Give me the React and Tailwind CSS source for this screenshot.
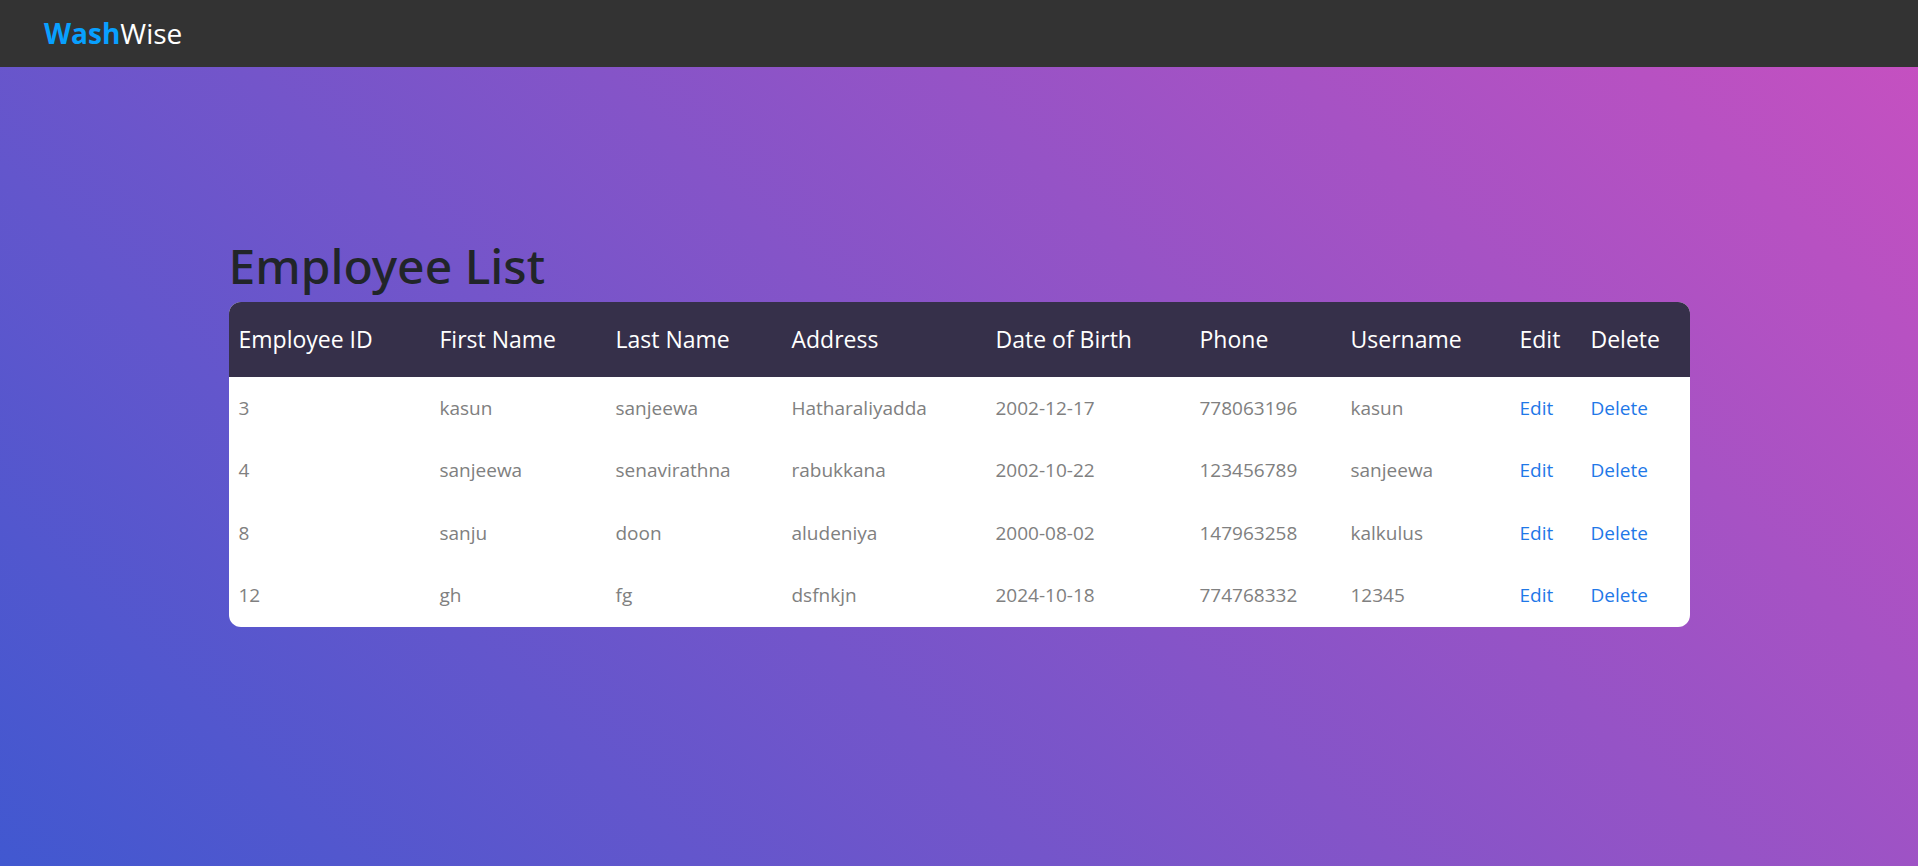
const columns = [
  { label: 'Employee ID', width: 'w-[201px]' },
  { label: 'First Name', width: 'w-[176px]' },
  { label: 'Last Name', width: 'w-[176px]' },
  { label: 'Address', width: 'w-[204px]' },
  { label: 'Date of Birth', width: 'w-[204px]' },
  { label: 'Phone', width: 'w-[151px]' },
  { label: 'Username', width: 'w-[169px]' },
  { label: 'Edit', width: 'w-[71px]' },
  { label: 'Delete', width: 'w-[109px]' },
];

const employees = [
  ['3', 'kasun', 'sanjeewa', 'Hatharaliyadda', '2002-12-17', '778063196', 'kasun'],
  ['4', 'sanjeewa', 'senavirathna', 'rabukkana', '2002-10-22', '123456789', 'sanjeewa'],
  ['8', 'sanju', 'doon', 'aludeniya', '2000-08-02', '147963258', 'kalkulus'],
  ['12', 'gh', 'fg', 'dsfnkjn', '2024-10-18', '774768332', '12345'],
];

function Header() {
  return (
    <header className="flex h-[67px] shrink-0 items-center bg-[#333333] px-11 pb-[2px]">
      <a href="#home" className="font-['Open_Sans','Noto_Sans',sans-serif] text-[28px] leading-9 text-white">
        <span className="font-bold text-[#08a0ff]">Wash</span>Wise
      </a>
    </header>
  );
}

function EmployeeTable() {
  return (
    <div className="overflow-hidden rounded-xl bg-white">
      <table className="w-full table-fixed border-collapse text-left font-['Open_Sans','Noto_Sans',sans-serif]">
        <thead className="bg-[#36304a] text-[23px] text-white">
          <tr className="h-[75px]">
            {columns.map((c) => (
              <th key={c.label} scope="col" className={`${c.width} pl-[10px] font-normal whitespace-nowrap`}>
                {c.label}
              </th>
            ))}
          </tr>
        </thead>
        <tbody className="text-[19px] text-[#808080]">
          {employees.map((row) => (
            <tr key={row[0]} className="h-[63px] even:h-[62px]">
              {row.map((value, i) => (
                <td key={i} className="pl-[10px] whitespace-nowrap">{value}</td>
              ))}
              <td className="pl-[10px]">
                <a href={`#edit-${row[0]}`} className="text-[#1f78e8]">Edit</a>
              </td>
              <td className="pl-[10px]">
                <a href={`#delete-${row[0]}`} className="text-[#1f78e8]">Delete</a>
              </td>
            </tr>
          ))}
        </tbody>
      </table>
    </div>
  );
}

export default function App() {
  return (
    <div className="flex min-h-screen flex-col bg-[linear-gradient(45deg,#4158d0,#c850c0)]">
      <Header />
      <main className="flex flex-1 items-center justify-center pb-[71px]">
        <section className="w-full max-w-[1461px]">
          <h1 className="pb-1.5 font-['Noto_Sans','Open_Sans',sans-serif] text-5xl leading-[60px] font-medium text-[#212529]">
            Employee List
          </h1>
          <EmployeeTable />
        </section>
      </main>
    </div>
  );
}
